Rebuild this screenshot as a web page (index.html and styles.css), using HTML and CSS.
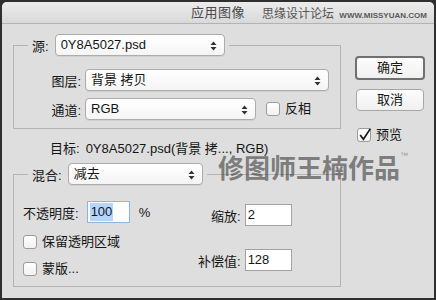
FILE: index.html
```html
<!DOCTYPE html>
<html lang="zh-CN">
<head>
  <meta charset="UTF-8" />
  <title>应用图像</title>
  <link rel="stylesheet" href="styles.css">
</head>
<body>
  <div class="window">
    <div class="titlebar">
      <span class="title">应用图像</span>
      <span class="site">思缘设计论坛 <span class="site-url">WWW.MISSYUAN.COM</span></span>
    </div>

    <div class="content">
      <div class="main">
        <fieldset class="group source">
          <legend>
            <span class="legend-label">源:</span>
            <span class="select source-select">0Y8A5027.psd<svg class="arrows" viewBox="0 0 7 10"><path d="M0.5 4 L3.5 0.5 L6.5 4 Z M0.5 6 L3.5 9.5 L6.5 6 Z"/></svg></span>
          </legend>
          <div class="row">
            <span class="label">图层:</span>
            <span class="select layer-select">背景 拷贝<svg class="arrows" viewBox="0 0 7 10"><path d="M0.5 4 L3.5 0.5 L6.5 4 Z M0.5 6 L3.5 9.5 L6.5 6 Z"/></svg></span>
          </div>
          <div class="row">
            <span class="label">通道:</span>
            <span class="select channel-select">RGB<svg class="arrows" viewBox="0 0 7 10"><path d="M0.5 4 L3.5 0.5 L6.5 4 Z M0.5 6 L3.5 9.5 L6.5 6 Z"/></svg></span>
            <span class="check invert"><span class="box"></span>反相</span>
          </div>
        </fieldset>

        <div class="target"><span class="target-label">目标:</span>0Y8A5027.psd(背景 拷..., RGB)</div>

        <fieldset class="group blend">
          <legend>
            <span class="legend-label">混合:</span>
            <span class="select blend-select">减去<svg class="arrows" viewBox="0 0 7 10"><path d="M0.5 4 L3.5 0.5 L6.5 4 Z M0.5 6 L3.5 9.5 L6.5 6 Z"/></svg></span>
          </legend>
          <div class="blend-body">
            <div class="col-left">
              <div class="opacity">
                <span class="opacity-label">不透明度:</span>
                <span class="field focused"><span class="selected">100</span></span>
                <span class="percent">%</span>
              </div>
              <span class="check"><span class="box"></span>保留透明区域</span>
              <span class="check"><span class="box"></span>蒙版...</span>
            </div>
            <div class="col-right">
              <span class="label">缩放:</span>
              <span class="field">2</span>
              <span class="label">补偿值:</span>
              <span class="field">128</span>
            </div>
          </div>
        </fieldset>

        <div class="watermark">修图师王楠作品<span class="tm">™</span></div>
      </div>

      <div class="side">
        <button class="btn default">确定</button>
        <button class="btn">取消</button>
        <span class="check preview">
          <span class="box"><svg viewBox="0 0 14 14"><path d="M3 7.5 L6 11.5 L12.5 1.5"/></svg></span>预览
        </span>
      </div>
    </div>
  </div>
</body>
</html>
```

FILE: styles.css
```css
* {
  box-sizing: border-box;
}

body {
  margin: 0;
  background-color: #2f2f2f;
  font-family: "Liberation Sans", "Noto Sans CJK SC", sans-serif;
  font-size: 13px;
  color: #151515;
}

.window {
  position: relative;
  margin: 2px;
  width: 432px;
  height: 296px;
  background-color: #dedede;
  border-radius: 5px 5px 0 0;
  overflow: hidden;
}

.titlebar {
  position: relative;
  height: 22px;
  display: flex;
  align-items: center;
  justify-content: center;
  background: linear-gradient(#ececec, #d9d9d9);
  border-bottom: 1px solid #b3b3b3;
}

.title {
  color: #4a4a4a;
  line-height: 16px;
  letter-spacing: 0.5px;
}

.site {
  position: absolute;
  left: 260px;
  top: 4px;
  white-space: nowrap;
  font-size: 12px;
  line-height: 16px;
  color: #555;
}

.site-url {
  font-family: "Liberation Sans", sans-serif;
  font-size: 8px;
  font-weight: bold;
  color: #5a5a5a;
  margin-left: 2px;
}

.content {
  display: flex;
  padding: 10px 0 0 11px;
}

.main {
  width: 328px;
}

.group {
  margin: 0;
  border: 1px solid #b4b4b4;
  min-width: 0;
}

legend {
  display: flex;
  align-items: center;
  padding: 0 4px;
}

.legend-label {
  margin-right: 6px;
}

.select {
  position: relative;
  display: flex;
  align-items: center;
  height: 22px;
  padding-left: 5px;
  background: linear-gradient(#ffffff, #f5f5f5);
  border: 1px solid #acacac;
  border-radius: 4px;
  box-shadow: 0 1px 0 rgba(0, 0, 0, 0.06);
  line-height: 18px;
}

.arrows {
  position: absolute;
  right: 7px;
  top: 6px;
  width: 7px;
  height: 10px;
  fill: #333;
}

.source {
  padding: 13px 0 8px 14px;
}

.source-select {
  width: 170px;
}

.row {
  display: flex;
  align-items: center;
  height: 22px;
}

.row + .row {
  margin-top: 7px;
}

.row .label {
  width: 53px;
  margin-right: 4px;
  text-align: right;
}

.layer-select {
  width: 244px;
}

.channel-select {
  width: 171px;
}

.check {
  display: flex;
  align-items: center;
  line-height: 16px;
}

.box {
  width: 14px;
  height: 14px;
  margin-right: 5px;
  border: 1px solid #9c9c9c;
  border-radius: 3px;
  background: linear-gradient(#ffffff, #f1f1f1);
}

.invert {
  margin-left: 10px;
}

.target {
  height: 34px;
  display: flex;
  align-items: center;
  padding: 2px 0 0 37px;
}

.target-label {
  margin-right: 6px;
}

.blend {
  height: 124px;
  padding: 13px 0 0 9px;
}

.blend legend {
  margin-left: 5px;
}

.blend-select {
  width: 135px;
}

.blend-body {
  display: flex;
}

.col-left {
  width: 175px;
  margin-top: 3px;
}

.col-left .check {
  margin-top: 11px;
}

.opacity {
  display: flex;
  align-items: center;
  height: 22px;
}

.opacity-label {
  margin-right: 8px;
}

.field {
  display: flex;
  align-items: center;
  width: 47px;
  height: 22px;
  padding-left: 2px;
  background-color: #fff;
  border: 1px solid #a2a2a2;
  line-height: 18px;
}

.field.focused {
  width: 43px;
  border-color: #8fb3e0;
}

.selected {
  background-color: #b4d5fe;
  padding: 0 1px;
}

.percent {
  margin-left: 9px;
}

.col-right {
  display: grid;
  grid-template-columns: auto 47px;
  column-gap: 4px;
  row-gap: 11px;
  align-items: center;
}

.col-right .label {
  text-align: right;
}

.watermark {
  position: absolute;
  left: 216px;
  top: 152px;
  font-family: "Noto Sans CJK SC", sans-serif;
  font-size: 26px;
  font-weight: bold;
  line-height: 26px;
  color: rgba(60, 60, 60, 0.62);
}

.tm {
  position: absolute;
  top: -3px;
  font-family: "Liberation Sans", sans-serif;
  font-size: 8px;
  font-weight: normal;
  line-height: 10px;
  color: #9a9a9a;
}

.side {
  display: flex;
  flex-direction: column;
  align-items: flex-start;
  padding: 22px 0 0 14px;
}

.btn {
  width: 68px;
  height: 22px;
  margin: 9px 0 0 1px;
  padding: 0;
  font-family: inherit;
  font-size: 13px;
  line-height: 18px;
  color: #151515;
  background: linear-gradient(#fdfdfd, #f0f0f0);
  border: 1px solid #a6a6a6;
  border-radius: 4px;
}

.btn.default {
  width: 70px;
  height: 24px;
  margin: 0;
  border: 2px solid #707070;
}

.preview {
  margin: 16px 0 0 2px;
}

.preview .box {
  position: relative;
}

.preview svg {
  position: absolute;
  left: -1px;
  top: -2px;
  width: 15px;
  height: 15px;
  overflow: visible;
  fill: none;
  stroke: #1a1a1a;
  stroke-width: 1.6;
}
```
